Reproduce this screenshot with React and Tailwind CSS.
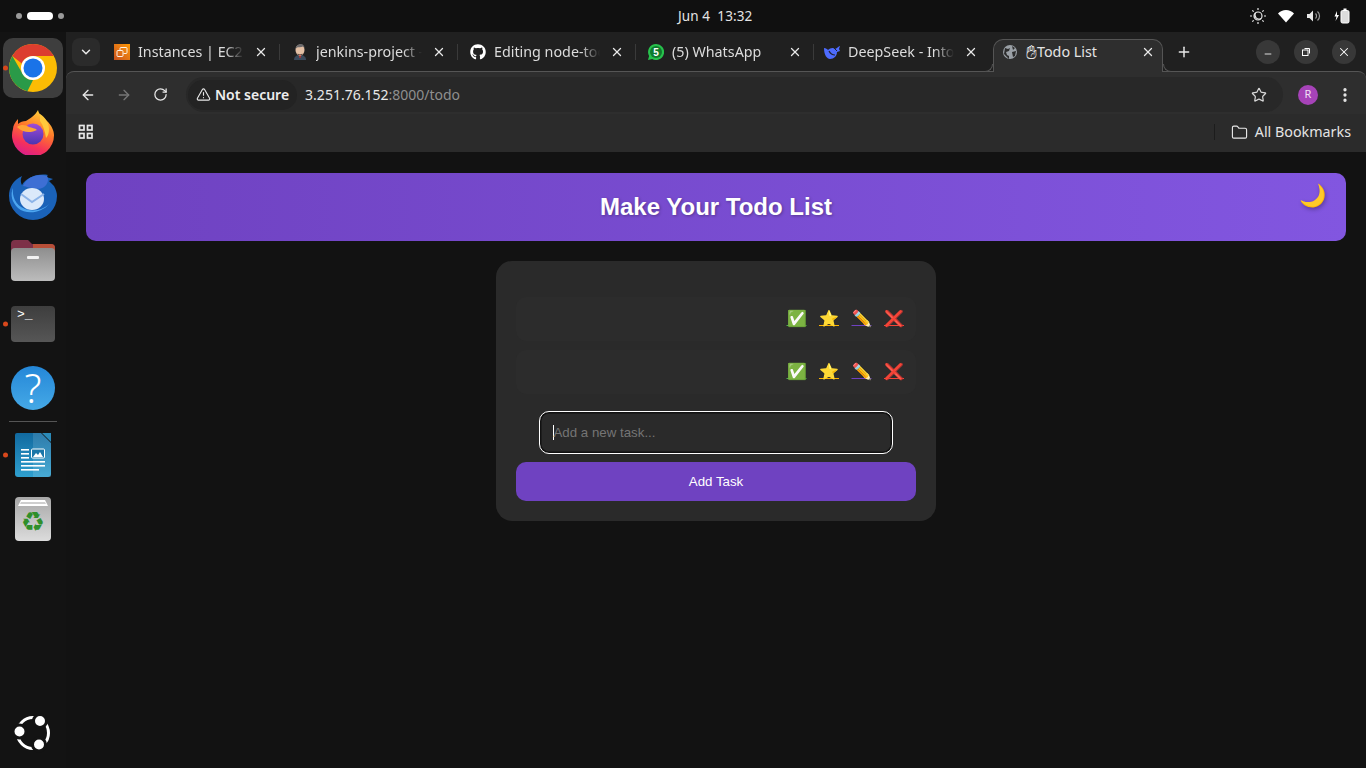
import React from "react";
import { ArrowLeft, ArrowRight, RotateCw, Star, X, Plus, ChevronDown, TriangleAlert, Minus, EllipsisVertical, Folder } from "lucide-react";
import { FaGithub } from "react-icons/fa";

const Dot = () => <span className="absolute left-[3px] top-1/2 -translate-y-1/2 w-[5px] h-[5px] rounded-full bg-[#d9481c]" />;

const Chrome = () => (
  <svg width="48" height="48" viewBox="0 0 48 48">
    <circle cx="24" cy="24" r="24" fill="#fbbc04" />
    <path d="M24 0a24 24 0 0 1 20.8 12H24a12 12 0 0 0-11.2 7.6L3.3 11.9A24 24 0 0 1 24 0z" fill="#dc3d2f" />
    <path d="M3.3 11.9l10.4 18A12 12 0 0 0 24 36l-5.6 11.3A24 24 0 0 1 3.3 11.9z" fill="#2a9a48" />
    <circle cx="24" cy="24" r="12" fill="#fff" />
    <circle cx="24" cy="24" r="9.5" fill="#1a73e8" />
  </svg>
);

const Firefox = () => (
  <svg width="44" height="46" viewBox="0 0 44 46">
    <defs>
      <linearGradient id="ffa" x1="0.7" y1="0" x2="0.3" y2="1">
        <stop offset="0" stopColor="#ffd43a" /><stop offset="0.4" stopColor="#ff7a2a" /><stop offset="0.75" stopColor="#f5305c" /><stop offset="1" stopColor="#d81e8e" />
      </linearGradient>
      <linearGradient id="ffb" x1="0.5" y1="0" x2="0.5" y2="1">
        <stop offset="0" stopColor="#a04bd8" /><stop offset="1" stopColor="#4a35b0" />
      </linearGradient>
    </defs>
    <path d="M27 1c1 5 5 7 9 11 5 5 7 10 7 14a21 21 0 1 1-41-6c0-3 2-7 5-10l0 5c2-2 5-3 8-3 3-2 9-5 12-11z" fill="url(#ffa)" />
    <circle cx="22" cy="25" r="10.5" fill="url(#ffb)" />
    <path d="M6 18c4-3 9-2 12 0 3 1 6 1 8 3-4 2-9 3-14 1-2-1-4-2-6-4z" fill="#ffa436" />
    <path d="M29 5c5 3 9 9 9 15 0 4-1 7-3 9-1-7-3-13-6-17z" fill="#ffc93c" />
  </svg>
);

const Thunderbird = () => (
  <svg width="48" height="48" viewBox="0 0 48 48">
    <path d="M13 4c-2 4-1 7 0 9C17 6 28 1 39 3l-2 2 7 2-4 2 5 5c2 4 3 7 3 10a24 24 0 0 1-48 0C0 16 4 8 13 4z" fill="#1a62b8" />
    <path d="M14 14C18 5 28 1 38 4c2 3 1 8-3 11-4 3-8 2-21-1z" fill="#3d6fd4" />
    <path d="M4 16c-1 8 2 17 12 21 8 3 18 1 24-5-6 8-22 12-31 4C3 30 1 23 4 16z" fill="#4da6f0" />
    <ellipse cx="23" cy="27" rx="12" ry="11" fill="#dbe9fa" />
    <path d="M12 22l11 8 12-8" fill="none" stroke="#8db4e8" strokeWidth="2" />
  </svg>
);

const Files = () => (
  <svg width="44" height="41" viewBox="0 0 44 41">
    <defs>
      <linearGradient id="fi" x1="0" y1="0" x2="0" y2="1"><stop offset="0" stopColor="#8e8e8e" /><stop offset="1" stopColor="#bcbcbc" /></linearGradient>
    </defs>
    <path d="M0 4a4 4 0 0 1 4-4h13l4 4h19a4 4 0 0 1 4 4v10H0z" fill="#7d3148" />
    <path d="M22 4h18a4 4 0 0 1 4 4v6H22z" fill="#b84f38" />
    <rect x="0" y="8" width="44" height="33" rx="4" fill="url(#fi)" />
    <rect x="16" y="16" width="12" height="3" rx="1" fill="#f2f2f2" />
  </svg>
);

const Terminal = () => (
  <div className="w-[44px] h-[36px] rounded-[4px] bg-gradient-to-b from-[#3e3e3e] to-[#565656] flex items-start pl-[6px] pt-[1px]">
    <span className="text-white text-[13px] leading-[16px] font-['Liberation_Mono',monospace]">&gt;_</span>
  </div>
);

const Help = () => (
  <div className="w-[44px] h-[44px] rounded-full bg-gradient-to-b from-[#2487d8] to-[#45a9e6] flex items-center justify-center">
    <span className="text-white text-[40px] font-light leading-none font-['Noto_Sans',sans-serif]">?</span>
  </div>
);

const Writer = () => (
  <svg width="36" height="44" viewBox="0 0 36 44">
    <defs>
      <linearGradient id="wr" x1="0" y1="0" x2="0" y2="1"><stop offset="0" stopColor="#11699f" /><stop offset="1" stopColor="#2fa0cf" /></linearGradient>
    </defs>
    <path d="M2 0h24l10 10v31a3 3 0 0 1-3 3H3a3 3 0 0 1-3-3V2a2 2 0 0 1 2-2z" fill="url(#wr)" />
    <path d="M18 0h8l10 10v34H18z" fill="#fff" opacity="0.12" />
    <path d="M27 0h9v9z" fill="#2a8ab8" />
    <rect x="6" y="16" width="8" height="1.6" fill="#fff" /><rect x="6" y="20" width="8" height="1.6" fill="#fff" /><rect x="6" y="24" width="8" height="1.6" fill="#fff" />
    <rect x="6" y="28" width="24" height="1.6" fill="#fff" /><rect x="6" y="32" width="24" height="1.6" fill="#fff" /><rect x="6" y="36" width="18" height="1.6" fill="#fff" />
    <rect x="16.5" y="16" width="13" height="9" rx="1" fill="#1a76a8" stroke="#fff" strokeWidth="1" />
    <path d="M18 24l3-4 2 2 2-3 3 5z" fill="#fff" />
  </svg>
);

const Trash = () => (
  <div className="w-[36px] h-[44px] rounded-[4px] bg-gradient-to-b from-[#a8a8a8] to-[#dcdcdc] flex flex-col items-center">
    <svg width="36" height="10" viewBox="0 0 36 10">
      <path d="M3 9l3-6h24l3 6z" fill="#fff" />
      <path d="M6 5h24l1 2H5z" fill="#cfcfcf" />
    </svg>
    <span className="text-[27px] leading-[30px] text-[#2f8f2a] font-['DejaVu_Sans',sans-serif]">{"\u267B\uFE0E"}</span>
  </div>
);

const UbuntuLogo = () => (
  <svg width="40" height="40" viewBox="0 0 40 40">
    <circle cx="20" cy="20" r="15.500" fill="none" stroke="#fff" strokeWidth="3" />
    <circle cx="27" cy="8" r="6.500" fill="#fff" stroke="#131313" strokeWidth="3" />
    <circle cx="6.500" cy="18.500" r="6.500" fill="#fff" stroke="#131313" strokeWidth="3" />
    <circle cx="26" cy="31.500" r="6.500" fill="#fff" stroke="#131313" strokeWidth="3" />
  </svg>
);

const DockSlot = ({ children, dot, active }) => (
  <div className="relative h-[64px] w-[66px] flex items-center justify-center">
    {active && <div className="absolute left-[3px] top-[2px] w-[60px] h-[60px] rounded-[10px] bg-[#3e3e3e]" />}
    <div className="relative flex">{children}</div>
    {dot && <Dot />}
  </div>
);

const Dock = () => (
  <aside className="w-[66px] shrink-0 bg-[#131313] flex flex-col pt-[4px] pb-[3px]">
    <DockSlot active dot><Chrome /></DockSlot>
    <DockSlot><Firefox /></DockSlot>
    <DockSlot><Thunderbird /></DockSlot>
    <DockSlot><Files /></DockSlot>
    <DockSlot dot><Terminal /></DockSlot>
    <DockSlot><Help /></DockSlot>
    <div className="h-[3px] flex items-center justify-center"><div className="w-[48px] h-px bg-[#555]" /></div>
    <DockSlot dot><Writer /></DockSlot>
    <DockSlot><Trash /></DockSlot>
    <div className="mt-auto"><DockSlot><UbuntuLogo /></DockSlot></div>
  </aside>
);

const TopBar = () => (
  <header className="h-[32px] shrink-0 bg-[#101010] grid grid-cols-[678px_auto_1fr] items-center font-['Noto_Sans',sans-serif] text-[#e4e4e4]">
    <div className="flex items-center pl-[16px] gap-[5px]">
      <span className="w-[6px] h-[6px] rounded-full bg-[#9a9a9a]" />
      <span className="w-[26px] h-[8px] rounded-full bg-white" />
      <span className="w-[6px] h-[6px] rounded-full bg-[#9a9a9a]" />
    </div>
    <div className="text-[13.500px] tracking-[0.1px]">Jun 4&nbsp;&nbsp;13:32</div>
    <div className="flex justify-end items-center pr-[16px] gap-[12px]">
      <svg width="16" height="16" viewBox="0 0 16 16" fill="none" stroke="#e8e8e8" strokeWidth="1.200">
        <circle cx="8" cy="8" r="4" fill="#101010" />
        <path d="M5.500 5a4 4 0 0 0 5.500 5.500A4 4 0 0 1 5.500 5z" fill="#e8e8e8" />
        <path d="M8 0v2M8 14v2M0 8h2M14 8h2M2.300 2.300l1.400 1.400M12.300 12.300l1.400 1.400M2.300 13.700l1.400-1.400M12.300 3.700l1.400-1.400" />
      </svg>
      <svg width="16" height="16" viewBox="0 0 16 16"><path d="M0 5.500C2 3.500 5 2 8 2s6 1.500 8 3.500L8 14.500z" fill="#fff" /></svg>
      <svg width="16" height="16" viewBox="0 0 16 16" fill="none"><path d="M1 6h2.500L7 2.500v11L3.500 10H1z" fill="#e8e8e8" /><path d="M9.500 5.500a3.500 3.500 0 0 1 0 5M11.500 3.500a6 6 0 0 1 0 9" stroke="#9a9a9a" strokeWidth="1.200" /></svg>
      <svg width="16" height="16" viewBox="0 0 16 16" fill="none"><path d="M3 3L0.500 8.500h2L1.500 13 5 7H3z" fill="#fff" /><rect x="7" y="2.500" width="8" height="12.500" rx="1.500" fill="#dcdcdc" stroke="#fff" /><rect x="9.500" y="0.500" width="3" height="2" fill="#fff" /></svg>
    </div>
  </header>
);

const AwsIcon = () => (
  <div className="w-[16px] h-[16px] bg-gradient-to-tr from-[#c8511b] to-[#ff9900] flex items-center justify-center">
    <svg width="12" height="12" viewBox="0 0 12 12" fill="none" stroke="#fff" strokeWidth="0.900"><rect x="1" y="4.500" width="6" height="6" rx="1" /><path d="M4 4V2.500a1 1 0 0 1 1-1h5a1 1 0 0 1 1 1v4a1 1 0 0 1-1 1H7.500" /></svg>
  </div>
);
const JenkinsIcon = () => (
  <svg width="16" height="16" viewBox="0 0 16 16">
    <path d="M2 16c0-3 2-5 6-5s6 2 6 5z" fill="#3b4a5c" />
    <path d="M7 11h2l-.5 3h-1z" fill="#c4342d" />
    <ellipse cx="8" cy="6" rx="4.500" ry="5.500" fill="#e3bfa4" />
    <path d="M3.500 5C4 1 7 0 9 0s3.500 2 3.500 4L11 2.500C9 3.500 6 3 5 3.500z" fill="#6d6b6d" />
    <path d="M5.500 9.500c1 1 4 1 5 0l-.5 1.500H6z" fill="#5f4a40" />
  </svg>
);
const WaIcon = () => (
  <svg width="16" height="16" viewBox="0 0 16 16">
    <path d="M8 0a8 8 0 1 1-3.800 15L0 16l1.100-4A8 8 0 0 1 8 0z" fill="#27c24c" />
    <circle cx="8" cy="8" r="6" fill="#0f7a2e" />
    <text x="8" y="11.500" textAnchor="middle" fontSize="10" fontWeight="700" fill="#fff" fontFamily="Liberation Sans, sans-serif">5</text>
  </svg>
);
const DeepseekIcon = () => (
  <svg width="16" height="14" viewBox="0 0 16 14">
    <path d="M0 3c2 0 3 1 4 2 2-2 5-3 7-1l2-1c1-1 2-2 3-2l-1 3 1 2-3 1c0 4-3 7-7 7-3 0-6-4-6-11z" fill="#4d6bfe" />
    <path d="M5 6c1 2 3 4 6 4" stroke="#20202c" strokeWidth="1.200" fill="none" />
    <path d="M10 3l3 3" stroke="#20202c" strokeWidth="1" fill="none" />
  </svg>
);
const GlobeIcon = () => (
  <svg width="14" height="14" viewBox="0 0 14 14">
    <circle cx="7" cy="7" r="7" fill="#9aa0a6" />
    <path d="M2 3l3 1 2-1-1 3-3 1 1 3 2 1v3L1 9zM9 1l3 2-2 2zM9 7l4-1-1 5-2 1z" fill="#2c2c2c" />
  </svg>
);

const Tab = ({ icon, title, w = "w-[178px]", pl = "pl-[12px]", sep = true }) => (
  <div className={`${w} ${pl} h-[39px] shrink-0 flex items-center`}>
    <div className="w-[16px] flex items-center justify-center shrink-0">{icon}</div>
    <div className="ml-[8px] flex-1 min-w-0 mr-[10px] overflow-hidden whitespace-nowrap text-[14.300px] text-[#dcdcdc] [mask-image:linear-gradient(to_right,#000_82%,transparent_100%)]">{title}</div>
    <X size={14} strokeWidth={2.200} className="text-[#e8e8e8] shrink-0" />
    <div className={`ml-[11px] w-px h-[16px] shrink-0 ${sep ? "bg-[#3a3a3a]" : "bg-transparent"}`} />
  </div>
);

const TabStrip = () => (
  <div className="h-[39px] shrink-0 bg-[#202020] flex items-center pl-[6px] font-['Noto_Sans',sans-serif]">
    <div className="w-[28px] h-[28px] rounded-[8px] bg-[#2b2b2b] flex items-center justify-center shrink-0 mr-[2px]">
      <ChevronDown size={14} strokeWidth={2.500} className="text-[#e8e8e8]" />
    </div>
    <Tab icon={<AwsIcon />} title="Instances | EC2 | us-east-1" />
    <Tab icon={<JenkinsIcon />} title="jenkins-project - Jenkins" />
    <Tab icon={<FaGithub size={16} className="text-white" />} title="Editing node-todo" />
    <Tab icon={<WaIcon />} title="(5) WhatsApp" />
    <Tab icon={<DeepseekIcon />} title="DeepSeek - Into the Unknown" w="w-[176px]" pl="pl-[10px]" sep={false} />
    <div className="relative self-end z-10 w-[170px] h-[33px] mb-[-1px] ml-[3px] pb-[8px] bg-[#2e2e2e] rounded-t-[10px] border border-b-0 border-[#555] flex items-center pl-[9px] pr-[7px]">
      <div className="absolute left-[-9px] bottom-0 w-[8px] h-[8px] border-b border-r border-[#555] rounded-br-[8px] bg-[#202020]" />
      <div className="absolute right-[-9px] bottom-0 w-[8px] h-[8px] border-b border-l border-[#555] rounded-bl-[8px] bg-[#202020]" />
      <GlobeIcon />
      <span className="ml-[9px] flex items-center text-[14.300px] text-[#e4e4e4] whitespace-nowrap"><span className="text-[19px] leading-[20px] font-['DejaVu_Sans',sans-serif]">{"\u270B\uFE0E"}</span>Todo List</span>
      <X size={14} strokeWidth={2.200} className="ml-auto text-[#e8e8e8]" />
    </div>
    <Plus size={16} strokeWidth={2.200} className="ml-[13px] text-[#e8e8e8]" />
    <div className="ml-auto flex items-center gap-[14px] pr-[10px]">
      <div className="w-[24px] h-[24px] rounded-full bg-[#383838] flex items-center justify-center"><Minus size={10} strokeWidth={2} className="text-white mt-[4px]" /></div>
      <div className="w-[24px] h-[24px] rounded-full bg-[#383838] flex items-center justify-center">
        <svg width="10" height="10" viewBox="0 0 10 10" fill="none" stroke="#fff"><rect x="1.500" y="3" width="5.500" height="5.500" /><path d="M3.500 1.500h5v5" /></svg>
      </div>
      <div className="w-[24px] h-[24px] rounded-full bg-[#383838] flex items-center justify-center"><X size={14} strokeWidth={1.800} className="text-white" /></div>
    </div>
  </div>
);

const Toolbar = () => (
  <div className="h-[43px] shrink-0 bg-[#2e2e2e] border-t border-[#555] rounded-t-[8px] flex items-center pt-[3px] pl-[14px] pr-[12px] font-['Noto_Sans',sans-serif]">
    <ArrowLeft size={16} strokeWidth={2} className="text-[#e8e8e8] shrink-0" />
    <ArrowRight size={16} strokeWidth={2} className="ml-[20px] text-[#777] shrink-0" />
    <RotateCw size={15} strokeWidth={2} className="ml-[21px] text-[#e8e8e8] shrink-0" />
    <div className="ml-[18px] flex-1 h-[35px] rounded-full bg-[#282828] flex items-center pl-[2px] pr-[16px]">
      <div className="h-[30px] px-[8px] rounded-full bg-[#232323] flex items-center gap-[4px]">
        <TriangleAlert size={15} strokeWidth={1.800} className="text-[#e8e8e8]" />
        <span className="text-[14px] font-semibold text-[#eeeeee]">Not secure</span>
      </div>
      <span className="ml-[8px] text-[14px] text-[#e8e8e8]">3.251.76.152<span className="text-[#8f8f8f]">:8000/todo</span></span>
      <Star size={16} strokeWidth={1.800} className="ml-auto text-[#d8d8d8]" />
    </div>
    <div className="ml-[15px] mr-[1px] w-[20px] h-[20px] rounded-full bg-[#a643b8] flex items-center justify-center text-[11px] text-[#f0e0f5]">R</div>
    <EllipsisVertical size={18} strokeWidth={2.400} className="ml-[17px] text-[#e8e8e8]" />
  </div>
);

const BookmarksBar = () => (
  <div className="h-[38px] shrink-0 bg-[#2b2b2b] flex items-center pb-[2px] pl-[12px] pr-[15px] font-['Noto_Sans',sans-serif]">
    <svg width="16" height="16" viewBox="0 0 16 16" fill="none" stroke="#e8e8e8" strokeWidth="1.700"><rect x="1.500" y="1.500" width="4.500" height="4.500" /><rect x="9.500" y="1.500" width="4.500" height="4.500" /><rect x="1.500" y="9.500" width="4.500" height="4.500" /><rect x="9.500" y="9.500" width="4.500" height="4.500" /></svg>
    <div className="ml-auto w-px h-[16px] bg-[#1c1c1c]" />
    <Folder size={17} strokeWidth={1.600} className="ml-[16px] text-[#e8e8e8]" />
    <span className="ml-[7px] text-[14.300px] text-[#e4e4e4]">All Bookmarks</span>
  </div>
);

const EmojiLink = ({ color, children }) => (
  <a className={`w-[20px] text-center text-[16px] leading-[20px] underline ${color}`}>{children}</a>
);

const TaskRow = () => (
  <div className="h-[44px] rounded-[10px] bg-[#2c2c2c] flex items-center justify-end gap-[12.500px] pr-[12px]">
    <EmojiLink color="decoration-[#4caf50]">✅</EmojiLink>
    <EmojiLink color="decoration-[#ffb300]">⭐</EmojiLink>
    <EmojiLink color="decoration-[#6f42c1]">✏️</EmojiLink>
    <EmojiLink color="decoration-[#f44336]">❌</EmojiLink>
  </div>
);

const Page = () => (
  <main className="flex-1 bg-[#121212] px-[20px] pt-[21px] font-['Liberation_Sans',Arial,sans-serif]">
    <div className="relative h-[68px] rounded-[10px] bg-gradient-to-r from-[#6f42c1] to-[#8256e0] flex items-center justify-center">
      <h1 className="text-[24px] font-bold text-white [text-shadow:1px_1px_3px_rgba(0,0,0,0.3)]">Make Your Todo List</h1>
      <span className="absolute right-[20px] top-[8px] text-[22px] leading-[30px] [text-shadow:1px_2px_4px_rgba(0,0,0,0.3)]">🌙</span>
    </div>
    <div className="mt-[20px] mx-auto w-[440px] h-[260px] rounded-[16px] bg-[#2a2a2a] px-[20px] pt-[36px] pb-[20px] flex flex-col">
      <div className="flex flex-col gap-[9px]">
        <TaskRow />
        <TaskRow />
      </div>
      <div className="mt-[17px] flex justify-center">
        <div className="w-[354px] h-[43px] rounded-[10px] border-[1.500px] border-white bg-[#2a2a2a] shadow-[inset_0_0_0_1.500px_#111] flex items-center pl-[12.500px]">
          <span className="w-px h-[15px] bg-white" />
          <span className="text-[13.300px] text-[#757575]">Add a new task...</span>
        </div>
      </div>
      <button className="mt-[8px] h-[39px] w-full rounded-[10px] bg-[#6f42c1] text-white text-[13.300px]">Add Task</button>
    </div>
  </main>
);

export default function App() {
  return (
    <div className="w-[1366px] h-[768px] overflow-hidden flex flex-col bg-[#121212]">
      <TopBar />
      <div className="flex-1 flex min-h-0">
        <Dock />
        <div className="flex-1 flex flex-col min-w-0 bg-[#202020]">
          <TabStrip />
          <Toolbar />
          <BookmarksBar />
          <Page />
        </div>
      </div>
    </div>
  );
}
